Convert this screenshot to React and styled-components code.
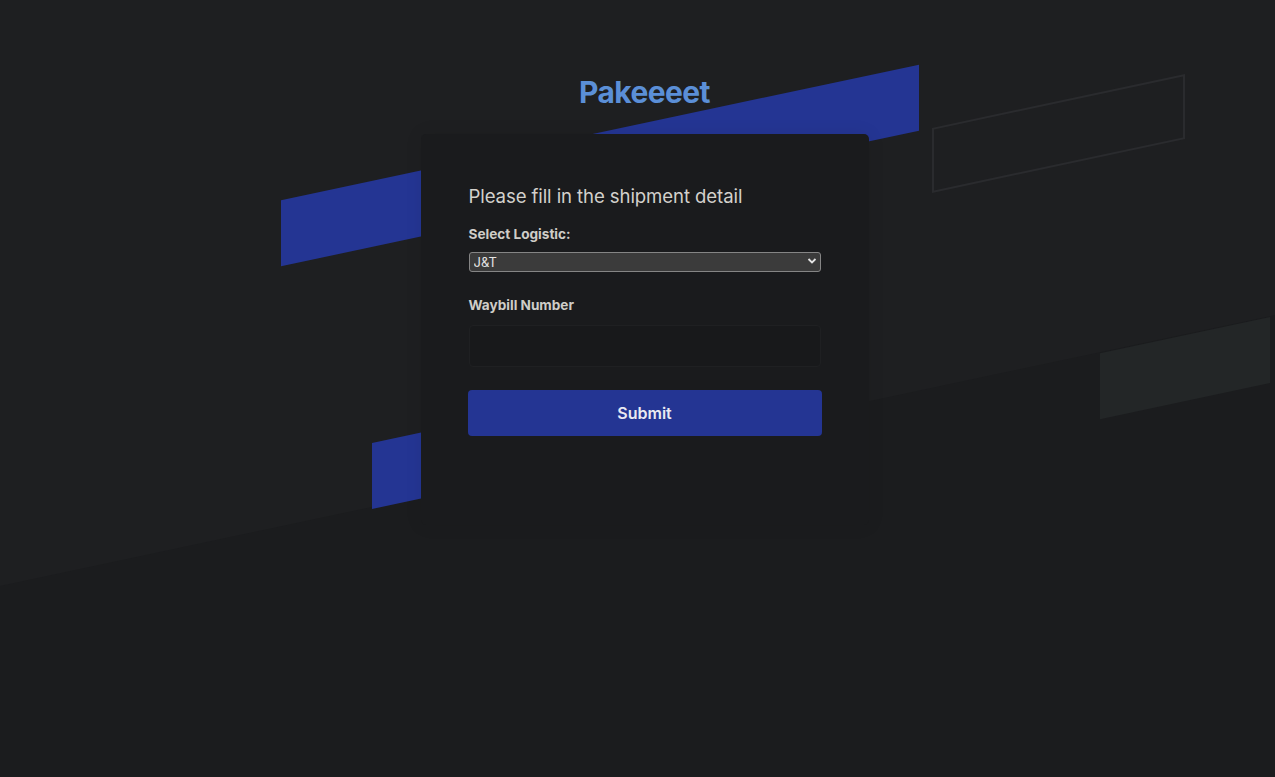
import styled, { createGlobalStyle } from "styled-components"

const GlobalStyle = createGlobalStyle`
  body {
    margin: 0;
    background: #1b1c1e;
    font-family: Inter, "Noto Sans", "Liberation Sans", sans-serif;
  }
`

const Page = styled.div`
  position: relative;
  min-height: 100vh;
  overflow: hidden;
  display: flex;
  flex-direction: column;
  align-items: center;
  padding: 74px 0 0 14px;
  box-sizing: border-box;
`

/* fundo inclinado estilo stripe */
const Backdrop = styled.div`
  position: absolute;
  inset: 0;
  overflow: hidden;
  z-index: 0;
`

const Skew = styled.div`
  position: absolute;
  top: 0;
  left: 0;
  width: 100%;
  height: 586px;
  background: #1e1f21;
  transform: skewY(-12deg);
  transform-origin: 0 0;
`

const Stripe = styled.span`
  position: absolute;
  top: ${p => p.$top}px;
  left: ${p => p.$left}px;
  width: ${p => p.$width}px;
  height: ${p => p.$height || 66}px;
  box-sizing: border-box;
  background: ${p => p.$kind === "blue" ? "#243593" : p.$kind === "grey" ? "#232627" : "transparent"};
  border: ${p => p.$kind === "outline" ? "2px solid #2a2b2e" : "none"};
`

const Logo = styled.h1`
  position: relative;
  z-index: 1;
  margin: 0;
  font-size: 30px;
  line-height: 36px;
  font-weight: 700;
  letter-spacing: -0.6px;
  color: #5b8fd7;
`

const Card = styled.form`
  position: relative;
  z-index: 1;
  margin-top: 24px;
  width: 448px;
  box-sizing: border-box;
  padding: 48px 48px 89px;
  background: #1a1b1d;
  border-radius: 5px;
  box-shadow: 0 0 18px rgba(0, 0, 0, 0.08);
  display: flex;
  flex-direction: column;
`

const Heading = styled.h2`
  margin: 0 0 16px;
  font-size: 18.6px;
  line-height: 28px;
  font-weight: 400;
  color: #d3d1cc;
  letter-spacing: -0.1px;
`

const Label = styled.label`
  font-size: 13.6px;
  line-height: 16px;
  font-weight: 700;
  color: #cfcdc8;
  margin-bottom: ${p => p.$gap || 10}px;
`

const SelectWrap = styled.div`
  position: relative;
  height: 20px;
  margin-bottom: 26px;
`

const Select = styled.select`
  appearance: none;
  width: 100%;
  height: 20px;
  box-sizing: border-box;
  padding: 0 20px 0 4px;
  background: #3b3b3b;
  border: 1px solid #858585;
  border-radius: 3px;
  color: #e4e4e4;
  font-family: inherit;
  font-size: 13px;
  line-height: 18px;
  outline: none;
`

const Chevron = styled.svg`
  position: absolute;
  right: 4px;
  top: 6px;
  pointer-events: none;
`

const Input = styled.input`
  height: 42px;
  box-sizing: border-box;
  margin-bottom: 23px;
  padding: 0 12px;
  background: #18191b;
  border: 1px solid #1f2022;
  border-radius: 4px;
  color: #e4e4e4;
  font-family: inherit;
  font-size: 14px;
  outline: none;
`

const Button = styled.button`
  height: 46px;
  margin: 0 -1px;
  border: none;
  border-radius: 4px;
  background: #243593;
  color: #e9e9f1;
  font-family: inherit;
  font-size: 16px;
  font-weight: 600;
  cursor: pointer;
`

export default function App() {
  return (
    <>
      <GlobalStyle />
      <Page>
        <Backdrop>
          <Skew>
            <Stripe $kind="blue" $top={260} $left={281} $width={638} />
            <Stripe $kind="outline" $top={326} $left={932} $width={253} $height={65} />
            <Stripe $kind="blue" $top={522} $left={372} $width={300} />
            <Stripe $kind="grey" $top={587} $left={1100} $width={170} />
          </Skew>
        </Backdrop>
        <Logo>Pakeeeet</Logo>
        <Card onSubmit={e => e.preventDefault()}>
          <Heading>Please fill in the shipment detail</Heading>
          <Label $gap={9}>Select Logistic:</Label>
          <SelectWrap>
            <Select defaultValue="jnt">
              <option value="jnt">J&amp;T</option>
              <option value="jne">JNE</option>
              <option value="sicepat">SiCepat</option>
            </Select>
            <Chevron width="10" height="8" viewBox="0 0 10 8">
              <path d="M1.5 2 L5 5.5 L8.5 2" fill="none" stroke="#e4e4e4" strokeWidth="1.8" />
            </Chevron>
          </SelectWrap>
          <Label $gap={12}>Waybill Number</Label>
          <Input type="text" />
          <Button type="submit">Submit</Button>
        </Card>
      </Page>
    </>
  )
}
